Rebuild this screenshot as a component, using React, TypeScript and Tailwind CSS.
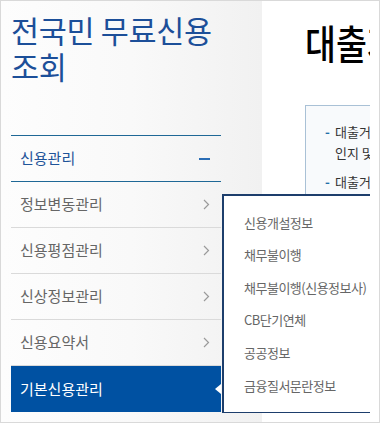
import React from 'react';

const menu = ['정보변동관리', '신용평점관리', '신상정보관리', '신용요약서'];
const subMenu = ['신용개설정보', '채무불이행', '채무불이행(신용정보사)', 'CB단기연체', '공공정보', '금융질서문란정보'];

function Chevron() {
  return (
    <svg width="7" height="11" viewBox="0 0 7 11" fill="none">
      <path d="M1 1l4.5 4.5L1 10" stroke="#9a9a9a" strokeWidth="1.2" />
    </svg>
  );
}

export default function App() {
  return (
    <div
      className="flex w-[380px] h-[423px] border border-[#d9d9d9] bg-white overflow-hidden"
      style={{ fontFamily: '"Noto Sans CJK KR", "Noto Sans", sans-serif' }}
    >
      <div className="relative flex w-[369px] shrink-0 h-full overflow-hidden">
        {/* sidebar */}
        <div className="w-[261px] shrink-0 h-full bg-gradient-to-r from-[#fdfdfd] via-[#f9f9f9] to-[#f1f1f1] pl-[10px]">
          <h1 className="pt-[11px] text-[30.5px] leading-[36px] text-[#1c4f99] tracking-[-0.3px]">
            전국민 무료신용
            <br />
            조회
          </h1>

          <div className="w-[210px] mt-[51px]">
            <div className="h-[47px] border-y border-[#1f6896] flex items-center justify-between pl-[9px] pr-[11px]">
              <span className="text-[15px] text-[#1f5499]">신용관리</span>
              <span className="block w-[11px] h-[2px] bg-[#2a6db5]" />
            </div>
            {menu.map((item) => (
              <div
                key={item}
                className="h-[46px] border-b border-[#dadada] flex items-center justify-between pl-[9px] pr-[11px]"
              >
                <span className="text-[15px] text-[#666]">{item}</span>
                <Chevron />
              </div>
            ))}
            <div className="relative h-[46px] bg-[#0051a2] flex items-center pl-[9px]">
              <span className="text-[15px] text-white">기본신용관리</span>
              <span className="absolute right-0 top-[18px] w-0 h-0 border-y-[5px] border-y-transparent border-r-[6px] border-r-white" />
            </div>
          </div>
        </div>

        {/* main */}
        <div className="w-[108px] shrink-0 pl-[43px] overflow-hidden">
          <h2 className="pt-[19px] text-[40px] leading-[44px] font-medium text-black whitespace-nowrap">
            <span className="inline-block origin-left scale-x-[0.84]">대출거래</span>
          </h2>
          <div className="mt-[41px] w-[200px] h-[120px] border border-[#a9c1d6] bg-[#f8fafc] pt-[15px] pl-[19px]">
            <div className="flex text-[13px] leading-[21px] text-[#333] whitespace-nowrap">
              <span className="w-[10px] text-[#1f6fa8] font-bold">-</span>
              <span>
                대출거래 정보를
                <br />
                인지 및 확인
              </span>
            </div>
            <div className="flex mt-[8px] text-[13px] leading-[21px] text-[#333] whitespace-nowrap">
              <span className="w-[10px] text-[#1f6fa8] font-bold">-</span>
              <span>대출거래 내역</span>
            </div>
          </div>
        </div>

        {/* dropdown */}
        <div className="absolute left-[221px] top-[193px] w-[149px] h-[219px] bg-white border-l-2 border-t-2 border-b border-[#1d3e6c] pl-[20px] pt-[10px]">
          {subMenu.map((item) => (
            <div key={item} className="h-[32.6px] flex items-center text-[13px] text-[#666] tracking-[-0.5px] whitespace-nowrap">
              {item}
            </div>
          ))}
        </div>
      </div>
      <div className="flex-1 bg-white" />
    </div>
  );
}
